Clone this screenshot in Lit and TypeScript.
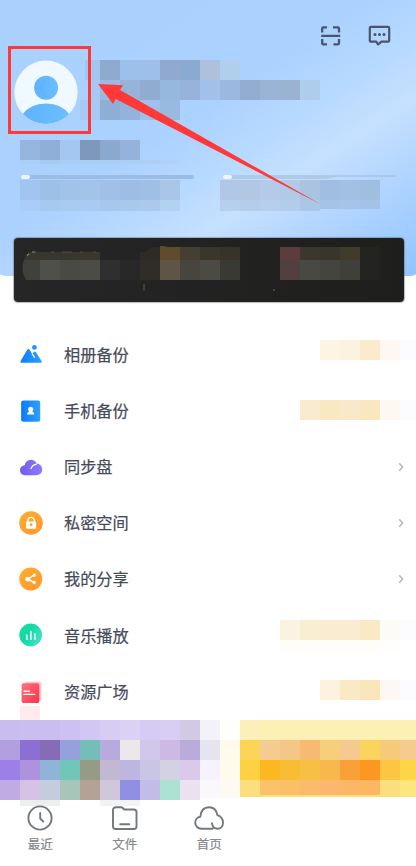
import { LitElement, html, svg, css, nothing, TemplateResult } from "lit";
import { customElement, property } from "lit/decorators.js";
import { styleMap } from "lit/directives/style-map.js";

/** A run of adjoining tiles: start x, y, tile height, colours (20px wide each). */
type Run = [x: number, y: number, h: number, colors: string];

@customElement("tile-mosaic")
class TileMosaic extends LitElement {
  @property({ attribute: false }) runs: Run[] = [];
  @property({ type: Number }) w = 0;
  @property({ type: Number }) h = 0;

  static styles = css`
    :host { display: block; line-height: 0; }
    .tiles { display: block; shape-rendering: crispEdges; }
  `;

  render() {
    return html`<svg class="tiles" width=${this.w} height=${this.h} viewBox="0 0 ${this.w} ${this.h}">
      ${this.runs.map(([x, y, h, colors]) =>
        colors.split(" ").map((c, i) =>
          svg`<rect x=${x + i * 20} y=${y} width="20" height=${h} fill=${"#" + c}></rect>`))}
    </svg>`;
  }
}

const profileTiles: Run[] = [
  [5, 0, 20, "a1c6f0"],
  [20, 0, 20, "8faacf 9dc0eb 9dbfe9 8faace 8baad1 adc1dc b0cfed"],
  [10, 20, 20, "a5c9f4"],
  [20, 20, 20, "9bb9e1 97b3d9 90add1 96b7de 96b3d9 a1c1ea 9ab8e0 93add0 9ab4d5 9ab3d3 aecdec"],
  [0, 40, 20, "a6caf4 8faed4 94b3dc 9fc0ea 98badf"],
];
const idTiles: Run[] = [
  [0, 0, 20, "96b5df 8fafd9 a3c7f1 7d98ba 8ba8cf 94b2da"],
  [0, 20, 4, "a9cef8 a6caf4 a9cdf5 a9cdf5 a9cdf6 abcff6 adcff6 afd2f8"],
];
const quotaLeft: Run[] = [
  [0, 0, 20, "a1c5f0 9cc0e8 a1c2e9 a2c3ea a0c0e7 9dbde4 9fbfe4 a9c6e8"],
  [0, 20, 11, "a9cdf8 a5c9f1 a9caf1 a9caf2 a6c7ee a8c8ec aac9ed b3d1f1"],
];
const quotaRight: Run[] = [
  [0, 0, 20, "b0c8e6 b2c7e4 b3cae8 b0cae8 a9c3e1 9fbee2 a1c0e2 9fbee0"],
  [0, 20, 11, "b6cfed b4cdeb b5cfed b2cceb abc7e7"],
  [100, 20, 9, "a5c3e7 a5c4e7 a3c2e5"],
];
const cardTiles: Run[] = [
  [14, 14, 8, "38372f 38372f 39382f"], [66, 14, 8, "39372e"],
  [26, 22, 20, "50504a 4a4a44 4c4c46 2f2f2f 282828 302c28 5f5547 48443e 4b4b44 3a3a35"],
  [132, 9, 13, "2e2b24"], [126, 14, 8, "2e2b24"],
  [146, 9, 13, "5f4c2d 443f30 3a3629 37332b"],
  [266, 9, 13, "5b3d3f 3c372d 38352b 413b2a 232320"],
  [266, 22, 20, "524040 494944 454540 3f403a 232321"],
];

const promoTiles: Run[] = [
  [0, 0, 20, "c9bcef cabdf0 cabdef cdc0f2 d2c7f2 d7ccf4 dad1f4 d6cbf4 d8cef4 d2c9e4 f3f2f8 fefefa fcefb9 fcf0b4 fcf0b4 fcf0b4 fcf0b4 fcf0b4 fcf0b4 fcf0b4 fcf0b4"],
  [0, 20, 20, "b19fe0 8c6fd3 866bb7 95a1dd 73beb8 b6abdc ece7ea d0c7eb ccbae5 bbabda e6e4ef fffbec fcd556 f5cb92 f4c688 f6bb70 f7ce7a f6ca8e fbd45d f5ca78 f5cb90"],
  [0, 40, 20, "9d80e7 ae92de 90b3d8 72c6b8 969b85 c2b8d2 bdb6e0 c9c6e5 d3d2e2 dac9eb f6f3fc fffbec fcd242 fbb820 f9bd34 f7c043 f7b84d f9a137 fc9822 fcc642 fcd647"],
  [0, 60, 20, "c1abe3 d5c2e4 c4cddd a8c5b9 b4a296 d1c7db 8f8fe4 c1bde7 abe2d1 ebe2ef"],
  [200, 60, 18, "faf8fc fdfaf1"],
  [240, 60, 17, "fcdf7c fcdf7c fcdf7c fcdf7c fcdf7c fcdf7c fcdf7c fcdf7c fce67f"],
  [260, 60, 15, "fac269 fac069 fabb6d fbb76d fbb667 fbb762"],
  [20, 80, 6, "edefed edefed"], [100, 80, 6, "f1f4f3 f2f3f2"],
];

const icons: Record<string, TemplateResult> = {
  album: svg`<path d="M2.2 20.8Q.8 20.6 1.6 19L8.2 7.8Q9.4 6.1 10.7 7.8L13.2 12.2 15 9.8Q15.8 9 16.7 10L22.6 19Q23.5 20.6 22 20.8Z" fill="url(#blue)"/>
    <path d="M13 11.8 14.7 13.9 15.6 15.8" fill="none" stroke="#fff" stroke-width="1.2"/><circle cx="15.4" cy="5.4" r="2.4" fill="#2a92ff"/>`,
  phone: svg`<rect x="2.4" y="1.4" width="18.8" height="21.4" rx="2" fill="url(#blue)"/><path d="M2.8 2.6v19" stroke="#0870e8" stroke-width=".8"/>
    <circle cx="11.7" cy="10.3" r="2.5" fill="#fff"/><path d="M10.2 11h3l.4 2.1 1.5.8v1.7H8.2v-1.7l1.6-.8Z" fill="#fff"/>`,
  cloud: svg`<path d="M5.7 20.2A5 5 0 0 1 1 15.3 5 5 0 0 1 5.7 10.2 6.2 6.2 0 0 1 17.5 8.5 6 6 0 0 1 23.3 14.4 5.8 5.8 0 0 1 17.5 20.2Z" fill="url(#purple)"/>
    <path d="M11.8 14Q13.3 9.7 17.8 9.2" fill="none" stroke="#fff" stroke-width="1.3"/>`,
  lock: svg`<circle cx="12" cy="12" r="11.8" fill="url(#orange)"/><path d="M8.9 11V9.6a3.2 3.2 0 0 1 6.4 0V11" fill="none" stroke="#fff" stroke-width="1.4"/>
    <rect x="7.1" y="10.5" width="10" height="7.3" rx="1" fill="#fff"/><circle cx="12.1" cy="13.7" r="1.4" fill="#ffa12c"/>`,
  share: svg`<circle cx="11.8" cy="12" r="11.5" fill="url(#orange)"/><path d="M15.2 8 8.8 12.2 15.2 15.6" fill="none" stroke="#fff" stroke-width="1.4"/>
    <circle cx="8.8" cy="12.2" r="2.4" fill="#fff"/><circle cx="15.2" cy="8.2" r="1.6" fill="#fff"/><circle cx="15.2" cy="15.3" r="1.6" fill="#fff"/>`,
  music: svg`<circle cx="11.7" cy="12" r="11.4" fill="url(#green)"/><path d="M7.8 12.2v4M11.8 8.6v7.6M15.8 11v5.2" stroke="#e9fff8" stroke-width="1.7" stroke-linecap="round"/>`,
  news: svg`<rect x="5.5" y="1.7" width="16.8" height="19" rx="1.6" fill="#ffc3ca"/><rect x="2.6" y="3.3" width="17.7" height="19.6" rx="1.6" fill="url(#red)"/>
    <path d="M5.1 11.2h5.2M5.1 14.4h10.6" stroke="#fff" stroke-width="1.4" stroke-linecap="round"/>`,
};

const gradients = svg`<defs>
  <linearGradient id="blue"><stop stop-color="#0b7dff"/><stop offset="1" stop-color="#2da0ff"/></linearGradient>
  <linearGradient id="purple"><stop stop-color="#725cf0"/><stop offset="1" stop-color="#8a7cff"/></linearGradient>
  <linearGradient id="orange" y2="1"><stop stop-color="#ffb02e"/><stop offset=".45" stop-color="#ffa32c"/><stop offset="1" stop-color="#ff9838"/></linearGradient>
  <linearGradient id="green" y2=".6"><stop stop-color="#19dca4"/><stop offset=".5" stop-color="#10dba3"/><stop offset="1" stop-color="#48dfc5"/></linearGradient>
  <linearGradient id="red" y2="1"><stop stop-color="#ff7381"/><stop offset="1" stop-color="#ff3048"/></linearGradient>
</defs>`;

interface Item { icon: string; label: string; tiles?: Run[]; w?: number; top?: number; spill?: boolean }

const items: Item[] = [
  { icon: "album", label: "相册备份", w: 96, top: 13.6, tiles: [[0, 0, 20, "fcf5e2 fbf3df f9ebcb fdf9f2 fcfcfe"], [0, 20, 6, "fefefd fefefd fefefd fefefd"]] },
  { icon: "phone", label: "手机备份", w: 116, top: 17.4, tiles: [[0, 0, 20, "f9ebd0 f9e8c2 f9e9ca f9e7bf fdf9f2 fcfcfe"]] },
  { icon: "cloud", label: "同步盘" },
  { icon: "lock", label: "私密空间" },
  { icon: "share", label: "我的分享" },
  { icon: "music", label: "音乐播放", w: 136, top: 12.6, tiles: [[0, 0, 20, "fbf2df f9edd2 f9ecd0 f9ecd0 f9e9c5 fdfbf5 fcfcfe"], [0, 20, 11, "fefdf8 fefdf8 fefdf8 fefdf8 fefdf8 fefefc"]] },
  { icon: "news", label: "资源广场", w: 96, top: 16.4, spill: true, tiles: [[0, 0, 20, "fcf2de f9e9c5 f9e6bd fdf9f2 fcfcfe"]] },
];

const tabs = [
  { label: "最近", art: svg`<circle cx="14" cy="14" r="11.6"/><path d="M14.2 9v5.5l3 3"/>` },
  { label: "文件", art: svg`<path d="M5.2 3.2H10Q11.1 3.2 11.8 4L13.2 5.5H22.8Q25.5 5.5 25.5 8.2V22.2Q25.5 25 22.8 25H4.7Q2 25 2 22.2V6.2Q2 3.2 5.2 3.2ZM9.2 20.3h9"/>` },
  { label: "首页", art: svg`<path d="M17.5 24.7H6.3A6 6 0 0 1 .2 18.8 6 6 0 0 1 5.3 12.7C5.8 7.5 8.6 3.2 14 3.2 18.4 3.2 21.6 6.2 22.4 11.2 26 12.5 28 15.3 28 18.7 28 22.3 25.7 24.7 22.7 24.7 19.4 24.7 17.4 22.4 17 19.3"/>` },
];

@customElement("app-root")
class AppRoot extends LitElement {
  static styles = css`
    :host {
      display: block; position: relative; width: 416px; height: 866px; overflow: hidden;
      background: #fff; color: #454b59;
      font-family: "Noto Sans CJK SC", "Noto Sans", sans-serif;
    }
    svg { display: block; overflow: visible; }
    .header {
      height: 275.5px; box-sizing: border-box; padding: 22px 20px 0;
      border-radius: 0 0 9px 9px / 0 0 2px 2px;
      background: linear-gradient(147deg, #aad0fe 0%, #abd1ff 44%, #b6d9ff 56%, #c6e0ff 67%, #afd4ff 81%, #92c4ff 100%);
    }
    .actions { display: flex; justify-content: flex-end; gap: 25px; height: 38px; padding-right: 4.3px; }
    .profile { display: flex; height: 80px; }
    .avatar { margin: 0 0 0 -6px; width: 66px; }
    .id { height: 35px; }
    .quotas { display: flex; gap: 26px; }
    .quota { width: 174px; }
    .track { height: 4px; margin: 0 0 1px 1px; width: 173px; border-radius: 2px; background: #9abce5; }
    .track.pale { margin-left: 3px; background: linear-gradient(90deg, #afcae7 60%, #a7c7e9 100%); clip-path: polygon(0 0, 100% 0, 100% 50%, 65% 50%, 60% 100%, 0 100%); }
    .thumb { width: 9px; height: 4px; border-radius: 2px; background: #eef6fd; }
    .card {
      position: relative; margin: -37.5px 12px 0 14px; height: 64px; width: 390px; border-radius: 4px;
      background: linear-gradient(90deg, #262626, #1e1e1d); box-shadow: 0 0 1px .5px #5556;
    }
    .card-marks { position: absolute; left: 0; top: 0; }
    .list { margin-top: 24.4px; }
    .row { display: flex; height: 56.2px; align-items: center; }
    .icon { position: relative; width: 24px; margin-left: 19px; }
    .spill { position: absolute; left: 1px; top: 26px; width: 20px; height: 14.2px; background: #fdebed; }
    .label { margin: -1.8px 0 0 21px; flex: 1; font-size: 16.2px; line-height: 24px; -webkit-text-stroke: .2px #454b59; }
    .chevron { margin-right: 12px; }
    .tiles { align-self: flex-start; }
    .promo { margin-top: .2px; }
    .tabs { display: flex; margin: -2px 0 0 -2px; }
    .tab { width: 84.5px; display: flex; flex-direction: column; align-items: center; color: #85888e; font-size: 12.5px; line-height: 18px; -webkit-text-stroke: .2px #85888e; }
    .art { stroke: #737780; fill: none; stroke-width: 1.9; stroke-linecap: round; stroke-linejoin: round; margin-bottom: 3px; }
    .marks { position: absolute; left: 0; top: 0; pointer-events: none; }
  `;

  render() {
    return html`
      <header class="header">
        <div class="actions">
          <svg width="28" height="28" viewBox="0 0 28 28" fill="none" stroke="#49566a" stroke-width="2.3">
            <path d="M7.2 10.5V6.4q0-1 1-1h3.8M18 5.4h5q1 0 1 1v4.1M24 17v4.3q0 1-1 1h-4.5M12 22.3H8.2q-1 0-1-1V17M6.2 13.8h19"/>
          </svg>
          <svg width="24" height="28" viewBox="0 0 24 28">
            <path d="M3 4.8h17q1.2 0 1.2 1.2v12.5q0 1.2-1.2 1.2h-6.6L10.2 22.5 8.2 19.7H3q-1.2 0-1.2-1.2V6Q1.8 4.8 3 4.8Z" fill="none" stroke="#49566a" stroke-width="2.2" stroke-linejoin="round"/>
            <circle cx="7" cy="12.5" r="1.5" fill="#49566a"/><circle cx="11.5" cy="12.5" r="1.5" fill="#49566a"/><circle cx="16" cy="12.5" r="1.5" fill="#49566a"/>
          </svg>
        </div>
        <div class="profile">
          <svg class="avatar" width="66" height="66" viewBox="0 0 66 66">
            <defs>
              <clipPath id="round"><circle cx="32" cy="32.3" r="31.7"/></clipPath>
              <linearGradient id="skin"><stop stop-color="#5eb2ff"/><stop offset="1" stop-color="#6cbfff"/></linearGradient>
            </defs>
            <circle cx="32" cy="32.3" r="31.7" fill="#eff9ff"/>
            <circle cx="32.1" cy="27.8" r="12" fill="url(#skin)"/>
            <path d="M8 55Q16 43.6 32 43.6T56 55V66H8Z" fill="url(#skin)" clip-path="url(#round)"/>
          </svg>
          <tile-mosaic .runs=${profileTiles} w="270" h="60"></tile-mosaic>
        </div>
        <tile-mosaic class="id" .runs=${idTiles} w="160" h="24"></tile-mosaic>
        <div class="quotas">
          <div class="quota"><div class="track"><div class="thumb"></div></div><tile-mosaic .runs=${quotaLeft} w="160" h="31"></tile-mosaic></div>
          <div class="quota"><div class="track pale"><div class="thumb"></div></div><tile-mosaic .runs=${quotaRight} w="160" h="31"></tile-mosaic></div>
        </div>
      </header>

      <section class="card">
        <tile-mosaic .runs=${cardTiles} w="389" h="63"></tile-mosaic>
        <svg class="card-marks" width="390" height="64" viewBox="0 0 390 64">
          <path d="M26 22H10Q6 32 12 42H26Z" fill="#3f413c"/>
          <path d="M10 22Q11 16 17 14V22Z" fill="#38372f"/>
          <path d="M13 17.5l2-1.5M18 14h3.5" stroke="#8f8a6e" stroke-width="1.2"/>
          <path d="M37 14h3M48 14h10M66 14h3M79 14h3" stroke="#584d30"/>
          <path d="M130 46v7M130 11v3" stroke="#454548" stroke-width="1.6"/>
          <path d="M126 9H147V8L137 9.5 132 14H126Z" fill="#242423"/>
          <path d="M146 9V8h4l4 1Z" fill="#5f4c2d"/>
          <circle cx="260" cy="52" r="1" fill="#484848"/>
        </svg>
      </section>

      <section class="list">
        ${items.map((it) => html`
          <div class="row">
            <div class="icon">
              <svg width="24" height="24" viewBox="0 0 24 24">${gradients}${icons[it.icon]}</svg>
              ${it.spill ? html`<div class="spill"></div>` : nothing}
            </div>
            <div class="label">${it.label}</div>
            ${it.tiles
              ? html`<tile-mosaic class="tiles" style=${styleMap({ marginTop: `${it.top}px` })} .runs=${it.tiles} .w=${it.w!} .h=${31}></tile-mosaic>`
              : html`<svg class="chevron" width="6" height="10" viewBox="0 0 6 10"><path d="M1.2 1.2 4.6 5 1.2 8.8" fill="none" stroke="#b9babd" stroke-width="1.7"/></svg>`}
          </div>`)}
      </section>

      <tile-mosaic class="promo" .runs=${promoTiles} w="416" h="86"></tile-mosaic>

      <nav class="tabs">
        ${tabs.map((t) => html`<div class="tab"><svg class="art" width="28" height="28" viewBox="0 0 28 28">${t.art}</svg>${t.label}</div>`)}
      </nav>

      <svg class="marks" width="416" height="300" viewBox="0 0 416 300">
        <rect x="9.5" y="47.5" width="80" height="85" fill="none" stroke="#ff3838" stroke-width="3"/>
        <path d="M98 84 123 85.3 120 90 321 204.5 115.7 99 113 104Z" fill="#ff3838"/>
      </svg>`;
  }
}
